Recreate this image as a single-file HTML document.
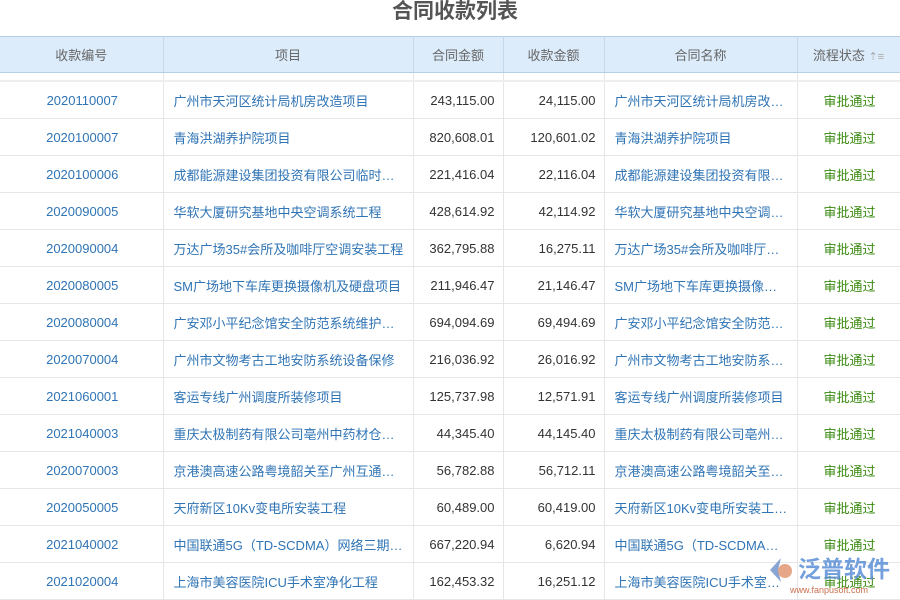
<!DOCTYPE html>
<html><head><meta charset="utf-8"><style>
body{margin:0;width:900px;height:600px;overflow:hidden;background:#fff;font-family:"Liberation Sans","Noto Sans CJK SC",sans-serif;position:relative}
.t{position:absolute;top:-3px;left:0;width:910px;text-align:center;font-size:21px;font-weight:bold;color:#555;line-height:30px}
table{position:absolute;top:36px;left:0;border-collapse:collapse;width:900px;table-layout:fixed;font-size:13px}
th{background:#dcecfb;color:#666;font-weight:normal;height:35px;border-right:1px solid #c5d9ec;border-top:1px solid #b5cfe6;border-bottom:1px solid #b5cfe6;padding:0}
td{height:36px;border-right:1px solid #e6e6e6;border-bottom:1px solid #e6e6e6;padding:0 8px 0 10px;white-space:nowrap;overflow:hidden;text-overflow:ellipsis;color:#333}
tr.g td{height:7px;padding:0;border-bottom:2px solid #eee}
td.c{text-align:center;color:#2f74b5}
td.l{color:#2f74b5}
td.r{text-align:right;color:#333}
td.s{text-align:center;color:#3a8a10}
.wm{position:absolute;left:752px;top:550px;font-size:23px;color:#5b8fd6;opacity:.85;font-weight:bold}
.wm2{position:absolute;left:790px;top:585px;font-size:9px;color:#c87050}
</style></head><body>
<div class="t">合同收款列表</div>
<table>
<colgroup><col style="width:163px"><col style="width:250px"><col style="width:90px"><col style="width:101px"><col style="width:193px"><col style="width:103px"></colgroup>
<tr><th>收款编号</th><th>项目</th><th>合同金额</th><th>收款金额</th><th>合同名称</th><th>流程状态 <span style="color:#aaa;font-size:11px">⇡≡</span></th></tr>
<tr class="g"><td></td><td></td><td></td><td></td><td></td><td></td></tr>
<tr><td class="c">2020110007</td><td class="l">广州市天河区统计局机房改造项目</td><td class="r">243,115.00</td><td class="r">24,115.00</td><td class="l">广州市天河区统计局机房改造项目</td><td class="s">审批通过</td></tr>
<tr><td class="c">2020100007</td><td class="l">青海洪湖养护院项目</td><td class="r">820,608.01</td><td class="r">120,601.02</td><td class="l">青海洪湖养护院项目</td><td class="s">审批通过</td></tr>
<tr><td class="c">2020100006</td><td class="l">成都能源建设集团投资有限公司临时办公</td><td class="r">221,416.04</td><td class="r">22,116.04</td><td class="l">成都能源建设集团投资有限公司</td><td class="s">审批通过</td></tr>
<tr><td class="c">2020090005</td><td class="l">华软大厦研究基地中央空调系统工程</td><td class="r">428,614.92</td><td class="r">42,114.92</td><td class="l">华软大厦研究基地中央空调系统</td><td class="s">审批通过</td></tr>
<tr><td class="c">2020090004</td><td class="l">万达广场35#会所及咖啡厅空调安装工程</td><td class="r">362,795.88</td><td class="r">16,275.11</td><td class="l">万达广场35#会所及咖啡厅空调</td><td class="s">审批通过</td></tr>
<tr><td class="c">2020080005</td><td class="l">SM广场地下车库更换摄像机及硬盘项目</td><td class="r">211,946.47</td><td class="r">21,146.47</td><td class="l">SM广场地下车库更换摄像机及硬盘</td><td class="s">审批通过</td></tr>
<tr><td class="c">2020080004</td><td class="l">广安邓小平纪念馆安全防范系统维护工程</td><td class="r">694,094.69</td><td class="r">69,494.69</td><td class="l">广安邓小平纪念馆安全防范系统</td><td class="s">审批通过</td></tr>
<tr><td class="c">2020070004</td><td class="l">广州市文物考古工地安防系统设备保修</td><td class="r">216,036.92</td><td class="r">26,016.92</td><td class="l">广州市文物考古工地安防系统设备</td><td class="s">审批通过</td></tr>
<tr><td class="c">2021060001</td><td class="l">客运专线广州调度所装修项目</td><td class="r">125,737.98</td><td class="r">12,571.91</td><td class="l">客运专线广州调度所装修项目</td><td class="s">审批通过</td></tr>
<tr><td class="c">2021040003</td><td class="l">重庆太极制药有限公司亳州中药材仓库工程</td><td class="r">44,345.40</td><td class="r">44,145.40</td><td class="l">重庆太极制药有限公司亳州中药材</td><td class="s">审批通过</td></tr>
<tr><td class="c">2020070003</td><td class="l">京港澳高速公路粤境韶关至广州互通立交</td><td class="r">56,782.88</td><td class="r">56,712.11</td><td class="l">京港澳高速公路粤境韶关至广州</td><td class="s">审批通过</td></tr>
<tr><td class="c">2020050005</td><td class="l">天府新区10Kv变电所安装工程</td><td class="r">60,489.00</td><td class="r">60,419.00</td><td class="l">天府新区10Kv变电所安装工程项目</td><td class="s">审批通过</td></tr>
<tr><td class="c">2021040002</td><td class="l">中国联通5G（TD-SCDMA）网络三期工程</td><td class="r">667,220.94</td><td class="r">6,620.94</td><td class="l">中国联通5G（TD-SCDMA）网络</td><td class="s">审批通过</td></tr>
<tr><td class="c">2021020004</td><td class="l">上海市美容医院ICU手术室净化工程</td><td class="r">162,453.32</td><td class="r">16,251.12</td><td class="l">上海市美容医院ICU手术室净化工程</td><td class="s">审批通过</td></tr>
</table>
<svg style="position:absolute;left:766px;top:555px" width="30" height="30"><path d="M15 3 L4 15 L15 27 L12 15 Z" fill="#6a8fc8" opacity=".8"/><circle cx="19" cy="16" r="7" fill="#e0906a" opacity=".8"/></svg>
<div class="wm" style="left:798px">泛普软件</div>
<div class="wm2">www.fanpusoft.com</div>
</body></html>
